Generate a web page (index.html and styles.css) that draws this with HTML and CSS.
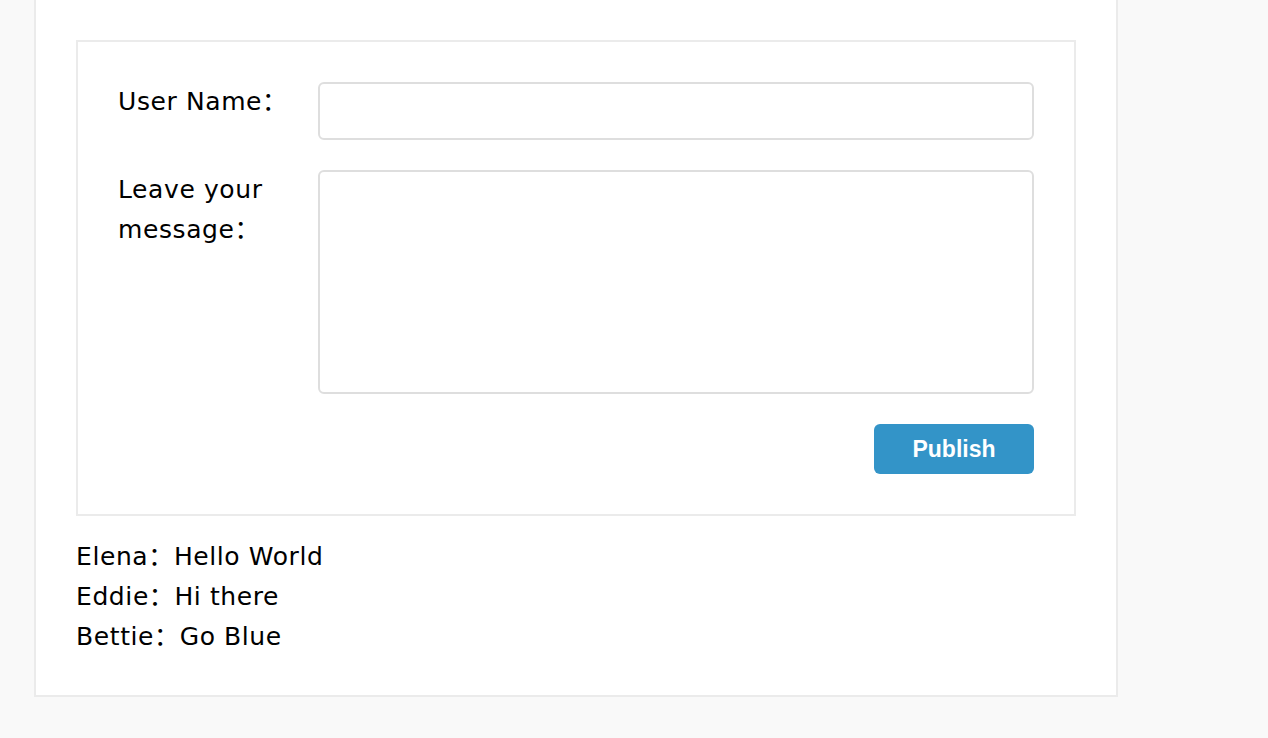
FILE: index.html
```html
<!DOCTYPE html>
<html>
<head>
<meta charset="utf-8">
<link rel="stylesheet" href="styles.css">
</head>
<body>
<div class="panel">
  <form class="form-box">
    <div class="row">
      <label class="label">User Name：</label>
      <input class="input" type="text">
    </div>
    <div class="row">
      <label class="label">Leave your message：</label>
      <textarea class="textarea"></textarea>
    </div>
    <div class="actions">
      <button class="btn" type="button">Publish</button>
    </div>
  </form>
  <ul class="comments">
    <li>Elena：Hello World</li>
    <li>Eddie：Hi there</li>
    <li>Bettie：Go Blue</li>
  </ul>
</div>
</body>
</html>
```
FILE: styles.css
```css
html, body {
  margin: 0;
  padding: 0;
  background: #f9f9f9;
}
body {
  padding-left: 34px;
  font-family: "DejaVu Sans", "Noto Sans CJK SC", sans-serif;
  font-size: 25px;
  line-height: 40px;
  letter-spacing: 0.6px;
  color: #000;
}
.panel {
  width: 1000px;
  background: #fff;
  border: 2px solid #ebebeb;
  border-top: none;
  padding: 40px 40px 38px 40px;
}
.form-box {
  margin: 0;
  border: 2px solid #ebebeb;
  padding: 40px;
  display: flex;
  flex-direction: column;
  gap: 30px;
}
.row {
  display: flex;
  align-items: flex-start;
}
.label {
  width: 200px;
  flex: none;
  padding-right: 30px;
  box-sizing: border-box;
}
.input, .textarea {
  flex: 1;
  box-sizing: border-box;
  border: 2px solid #dedede;
  border-radius: 6px;
  background: #fff;
  margin: 0;
  padding: 6px 10px;
  font: inherit;
  outline: none;
  resize: none;
}
.input {
  height: 58px;
}
.textarea {
  height: 224px;
}
.actions {
  display: flex;
  justify-content: flex-end;
}
.btn {
  width: 160px;
  height: 50px;
  border: none;
  border-radius: 6px;
  background: #3394c8;
  color: #fff;
  font-family: "Liberation Sans", sans-serif;
  font-weight: bold;
  font-size: 23px;
  letter-spacing: 0;
  padding: 0;
  margin: 0;
}
.comments {
  list-style: none;
  margin: 21px 0 0;
  padding: 0;
}
```
